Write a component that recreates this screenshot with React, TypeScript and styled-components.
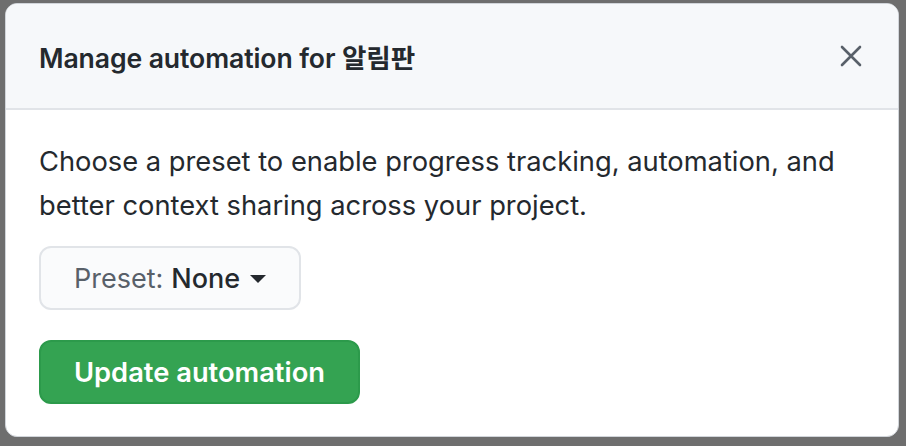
import React from "react";
import styled, { createGlobalStyle } from "styled-components";

const GlobalStyle = createGlobalStyle`
  html, body { margin: 0; padding: 0; }
  body {
    background: #6e6e6e;
    font-family: Inter, "Noto Sans CJK KR", sans-serif;
    -webkit-font-smoothing: antialiased;
  }
`;

const Backdrop = styled.div`
  width: 906px;
  height: 446px;
  box-sizing: border-box;
  padding: 3px 7px 9px 5px;
  background: #6e6e6e;
  display: flex;
`;

const Dialog = styled.div`
  flex: 1;
  display: flex;
  flex-direction: column;
  background: #ffffff;
  border-radius: 12px;
  border: 1px solid #d1d5da;
  overflow: hidden;
`;

const Header = styled.div`
  height: 106px;
  box-sizing: border-box;
  display: flex;
  align-items: center;
  justify-content: space-between;
  padding: 0 33px 0 33px;
  background: #f6f8fa;
  border-bottom: 2px solid #e1e4e8;
`;

const Title = styled.h2`
  margin: 0;
  font-size: 26.6px;
  font-weight: 600;
  color: #24292e;
  letter-spacing: -0.1px;
`;

const CloseButton = styled.button`
  border: 0;
  background: transparent;
  padding: 0;
  width: 28px;
  height: 28px;
  display: flex;
  align-items: center;
  justify-content: center;
  color: #586069;
  cursor: pointer;
`;

const Body = styled.div`
  padding: 30px 33px 0 33px;
  display: flex;
  flex-direction: column;
  align-items: flex-start;
`;

const Description = styled.p`
  margin: 0;
  font-size: 27.3px;
  line-height: 44px;
  color: #24292e;
`;

const PresetButton = styled.button`
  margin-top: 18px;
  height: 64px;
  box-sizing: border-box;
  padding: 0 33px;
  display: flex;
  align-items: center;
  gap: 8px;
  border-radius: 12px;
  border: 2px solid #e1e4e8;
  background: #fafbfc;
  font-family: inherit;
  font-size: 27px;
  cursor: pointer;
`;

const Label = styled.span<{ $muted?: boolean }>`
  color: ${(p) => (p.$muted ? "#586069" : "#24292e")};
  font-weight: ${(p) => (p.$muted ? 400 : 500)};
`;

const Caret = styled.span`
  width: 0;
  height: 0;
  border-left: 8px solid transparent;
  border-right: 8px solid transparent;
  border-top: 8px solid #24292e;
  margin-left: 2px;
  margin-top: 2px;
`;

const PrimaryButton = styled.button`
  margin-top: 30px;
  height: 64px;
  box-sizing: border-box;
  padding: 0 33px;
  border-radius: 12px;
  border: 2px solid #2c9a4b;
  background: #34a352;
  color: #ffffff;
  font-family: inherit;
  font-size: 27.3px;
  font-weight: 600;
  cursor: pointer;
`;

export default function App() {
  return (
    <>
      <GlobalStyle />
      <Backdrop>
        <Dialog>
          <Header>
            <Title>Manage automation for 알림판</Title>
            <CloseButton aria-label="Close">
              <svg width="24" height="24" viewBox="0 0 24 24" fill="none" stroke="currentColor" strokeWidth="2.6" strokeLinecap="round">
                <path d="M3 3L21 21M21 3L3 21" />
              </svg>
            </CloseButton>
          </Header>
          <Body>
            <Description>
              Choose a preset to enable progress tracking, automation, and
              <br />
              better context sharing across your project.
            </Description>
            <PresetButton>
              <Label $muted>Preset:</Label>
              <Label>None</Label>
              <Caret />
            </PresetButton>
            <PrimaryButton>Update automation</PrimaryButton>
          </Body>
        </Dialog>
      </Backdrop>
    </>
  );
}
